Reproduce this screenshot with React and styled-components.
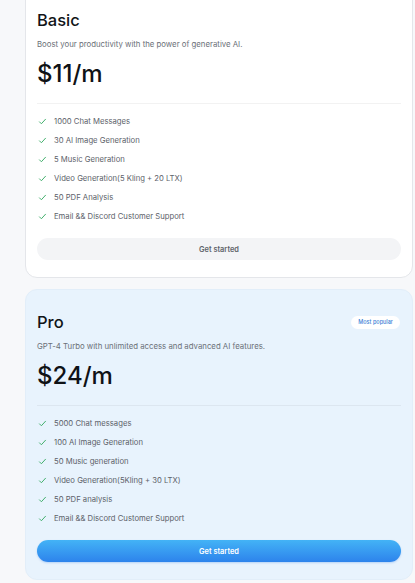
import React from "react";
import styled, { createGlobalStyle } from "styled-components";

const GlobalStyle = createGlobalStyle`
    html, body {
        margin: 0;
        padding: 0;
        background: #f7f8fa;
        font-family: Inter, "Noto Sans", sans-serif;
        overflow: hidden;
    }
`;

const plans = [
    {
        name: "Basic",
        description: "Boost your productivity with the power of generative AI.",
        price: "$11/m",
        features: [
            "1000 Chat Messages",
            "30 AI Image Generation",
            "5 Music Generation",
            "Video Generation(5 Kling + 20 LTX)",
            "50 PDF Analysis",
            "Email && Discord Customer Support",
        ],
    },
    {
        name: "Pro",
        description: "GPT-4 Turbo with unlimited access and advanced AI features.",
        price: "$24/m",
        popular: true,
        features: [
            "5000 Chat messages",
            "100 AI Image Generation",
            "50 Music generation",
            "Video Generation(5Kling + 30 LTX)",
            "50 PDF analysis",
            "Email && Discord Customer Support",
        ],
    },
];

const Check = () => (
    <svg width="9" height="9" viewBox="0 0 24 24" fill="none" stroke="#3fae6a" strokeWidth="2.6" strokeLinecap="round" strokeLinejoin="round">
        <path d="M4 13l5 5L20 6" />
    </svg>
);

const App = () => {
    return (
        <>
            <GlobalStyle />
            <Plans>
                {plans.map((plan) => (
                    <Card key={plan.name} $featured={plan.popular}>
                        <Header>
                            <Title>{plan.name}</Title>
                            {plan.popular && <Badge>Most popular</Badge>}
                        </Header>
                        <Description>{plan.description}</Description>
                        <Price>{plan.price}</Price>
                        <Divider />
                        <Features>
                            {plan.features.map((f) => (
                                <Feature key={f}>
                                    <Check />
                                    <span>{f}</span>
                                </Feature>
                            ))}
                        </Features>
                        <Button $featured={plan.popular}>Get started</Button>
                    </Card>
                ))}
            </Plans>
        </>
    );
};

const Plans = styled.div`
    display: grid;
    grid-row-gap: 11px;
    margin-top: -13px;
    padding: 0 2px 0 25px;
`;

const Card = styled.div`
    display: flex;
    flex-direction: column;
    padding: 21px 11px 17px;
    border-radius: 12px;
    background: ${(p) => (p.$featured ? "#e8f3fd" : "#ffffff")};
    border: 1px solid ${(p) => (p.$featured ? "#e2eef9" : "#e4e6ea")};
`;

const Header = styled.div`
    display: flex;
    justify-content: space-between;
    align-items: center;
    height: 22px;
`;

const Title = styled.h2`
    margin: 0;
    font-size: 16.5px;
    font-weight: 500;
    line-height: 22px;
    color: #111418;
`;

const Badge = styled.span`
    padding: 3px 7px;
    margin-right: 1px;
    border-radius: 999px;
    background: #ffffff;
    color: #3b7fd6;
    font-size: 5.5px;
    font-weight: 500;
    line-height: 7px;
`;

const Description = styled.p`
    margin: 7px 0 0;
    font-size: 7.8px;
    line-height: 12px;
    color: #6b7078;
`;

const Price = styled.div`
    margin-top: 9px;
    font-size: 24px;
    font-weight: 500;
    line-height: 30px;
    color: #0f1216;
`;

const Divider = styled.div`
    margin-top: 14px;
    height: 1px;
    background: rgba(0, 0, 0, 0.05);
`;

const Features = styled.ul`
    list-style: none;
    margin: 11px 0 0;
    padding: 0;
    display: grid;
    grid-row-gap: 7px;
`;

const Feature = styled.li`
    display: flex;
    align-items: center;
    gap: 7px;
    height: 12px;
    padding-left: 1px;
    font-size: 7.7px;
    color: #5d626a;
`;

const Button = styled.button`
    margin-top: 16px;
    height: 22px;
    border: none;
    border-radius: 999px;
    font-family: inherit;
    font-size: 7.4px;
    font-weight: 600;
    cursor: pointer;
    background: ${(p) => (p.$featured ? "linear-gradient(180deg, #43b3f6 0%, #2d83ec 100%)" : "#f3f4f6")};
    color: ${(p) => (p.$featured ? "#ffffff" : "#60646b")};
    box-shadow: ${(p) => (p.$featured ? "0 1px 2px rgba(37, 120, 230, 0.25)" : "none")};
`;

export default App;
